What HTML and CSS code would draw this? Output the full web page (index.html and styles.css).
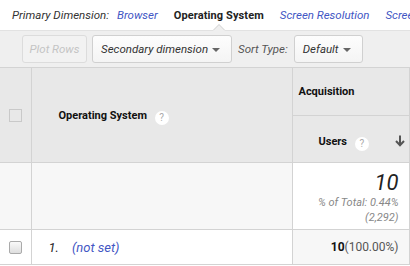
FILE: index.html
```html
<!DOCTYPE html>
<html lang="en">
<head>
<meta charset="UTF-8" />
<meta name="viewport" content="width=device-width, initial-scale=1" />
<title>Operating System report</title>
<link rel="stylesheet" href="styles.css">
</head>
<body>

<div class="dims">
  <span class="dims-label">Primary Dimension:</span>
  <a class="dim">Browser</a>
  <span class="dim current">Operating System</span>
  <a class="dim">Screen Resolution</a>
  <a class="dim">Screen Colors</a>
</div>

<div class="toolbar">
  <button class="btn disabled">Plot Rows</button>
  <button class="btn select secondary">Secondary dimension <span class="caret"></span></button>
  <span class="sort-label">Sort Type:</span>
  <button class="btn select sort">Default <span class="caret"></span></button>
</div>

<table class="report">
  <colgroup>
    <col class="c-check">
    <col class="c-dim">
    <col class="c-metric">
  </colgroup>
  <thead>
    <tr class="group-row">
      <th class="check-cell" rowspan="2"><span class="box"></span></th>
      <th class="dim-head" rowspan="2">Operating System <span class="help">?</span></th>
      <th class="group-head">Acquisition</th>
    </tr>
    <tr class="metric-row">
      <th class="metric-head">Users <span class="help">?</span>
        <svg class="sort-arrow" width="10" height="12" viewBox="0 0 10 12"><path d="M5 0.5V10M1 6l4 4.2L9 6" fill="none" stroke="#555" stroke-width="2"/></svg>
      </th>
    </tr>
  </thead>
  <tbody>
    <tr class="totals">
      <td class="check-cell"></td>
      <td></td>
      <td class="total-cell">
        <div class="total-num">10</div>
        <div class="total-sub">% of Total: 0.44%<br>(2,292)</div>
      </td>
    </tr>
    <tr class="data">
      <td class="check-cell"><span class="box row-box"></span></td>
      <td class="dim-cell"><span class="idx">1.</span><a class="val">(not set)</a></td>
      <td class="metric-cell"><b>10</b><span class="pct">(100.00%)</span></td>
    </tr>
  </tbody>
</table>

</body>
</html>
```

FILE: styles.css
```css
body { margin: 0; font-family: Roboto, "Liberation Sans", sans-serif; font-size: 12px; color: #222; background: #fff; width: 410px; height: 266px; overflow: hidden; }

.dims { height: 30px; display: flex; white-space: nowrap; padding-left: 12px; font-size: 11.5px; font-style: italic; color: #333; }
.dims > * { display: flex; align-items: center; flex-shrink: 0; }
.dims-label { margin-right: 8px; }
.dim { color: #4256c4; margin-right: 16px; position: relative; }
.dim.current { color: #222; font-style: normal; font-weight: bold; font-size: 11px; letter-spacing: 0.1px; }
.dim.current::before, .dim.current::after { content: ""; position: absolute; left: 50%; margin-left: -6px; border: 6px solid transparent; border-top: 0; }
.dim.current::before { bottom: 0; border-bottom-color: #cfcfcf; }
.dim.current::after { bottom: -1px; border-bottom-color: #efefef; }

.toolbar { height: 37px; background: #efefef; border-top: 1px solid #e2e2e2; display: flex; align-items: center; padding-left: 22px; box-sizing: border-box; }
.btn { font: italic 11.5px Roboto, "Liberation Sans", sans-serif; height: 28px; border: 1px solid #d0d0d0; border-radius: 3px; background: linear-gradient(#fdfdfd, #f4f4f4); color: #333; padding: 0 8px; margin-right: 5px; display: flex; align-items: center; white-space: nowrap; }
.btn.disabled { width: 65px; padding: 0; color: #c4c4c4; background: #f2f2f2; border-color: #dcdcdc; justify-content: center; }
.btn.secondary { width: 140px; }
.btn.sort { width: 69px; }
.caret { margin-left: auto; margin-right: 3px; border: 4px solid transparent; border-top: 4px solid #666; border-bottom: 0; margin-top: 1px; }
.sort-label { font-style: italic; font-size: 11.5px; color: #555; margin: 0 6px 0 1px; }

.report { border-collapse: collapse; table-layout: fixed; width: 409px; }
.c-check { width: 31px; }
.c-dim { width: 261px; }
.c-metric { width: 117px; }
.report th, .report td { border: 1px solid #d3d3d3; padding: 0; }
.report tr > :first-child { border-left: 0; }
thead th { background: #e8e8e8; font-weight: bold; text-align: left; font-size: 11px; color: #111; }
.group-row { height: 48px; }
.metric-row { height: 47px; }
.check-cell { text-align: center; }
.box { display: inline-block; width: 11px; height: 11px; border: 1px solid #c9c9c9; vertical-align: middle; }
.row-box { border-radius: 2px; border-color: #aaa; background: linear-gradient(#fafafa, #dedede); }
.dim-head { padding: 3px 0 0 27px !important; }
.group-head { padding-left: 6px !important; }
.metric-head { padding: 8px 0 0 26px !important; position: relative; }
.help { display: inline-block; width: 14px; height: 14px; line-height: 14px; border-radius: 50%; background: #fff; color: #aaa; font-size: 10px; text-align: center; font-weight: normal; margin-left: 5px; vertical-align: -2px; }
.sort-arrow { position: absolute; right: 4px; top: 19px; }

.totals { height: 67px; }
.totals td { background: #f7f7f7; }
.totals .total-cell { background: #fff; text-align: right; padding-right: 10px; vertical-align: top; padding-top: 9px; }
.total-num { font-size: 22px; font-style: italic; line-height: 22px; color: #222; }
.total-sub { font-size: 11px; font-style: italic; color: #888; line-height: 14.5px; margin-top: 2px; }

.data { height: 35px; }
.dim-cell { padding-left: 17px !important; font-style: italic; font-size: 13px; }
.idx { color: #222; margin-right: 13px; }
.val { color: #4256c4; }
.metric-cell { background: #f7f7f7; text-align: right; padding-right: 10px !important; }
.metric-cell b { color: #111; }
.pct { color: #555; }
```
